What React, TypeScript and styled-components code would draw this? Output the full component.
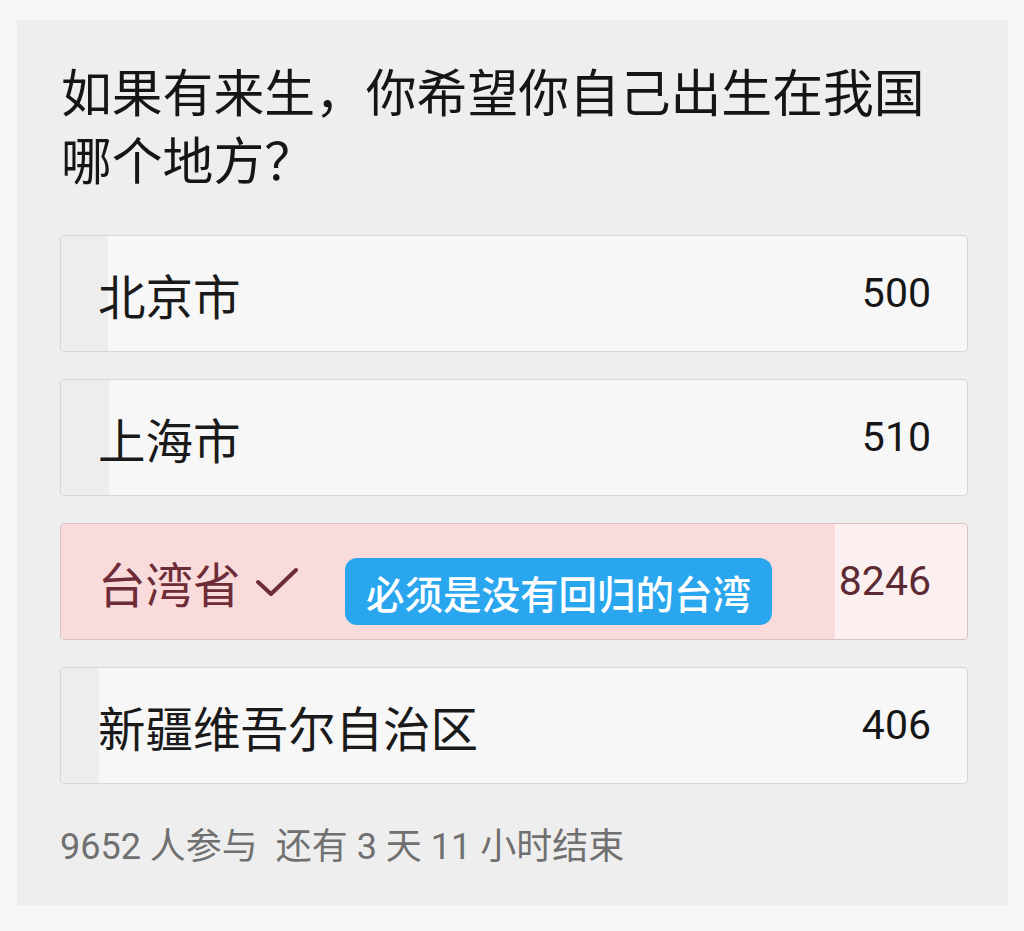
import React from "react";
import styled, { createGlobalStyle } from "styled-components";

const GlobalStyle = createGlobalStyle`
  html, body {
    margin: 0;
    padding: 0;
    background: #f6f6f6;
  }
  body {
    font-family: Roboto, "Noto Sans CJK SC", "Noto Sans", sans-serif;
  }
`;

const Page = styled.div`
  width: 1024px;
  height: 931px;
  box-sizing: border-box;
  padding: 20px 16px 26px 17px;
  background: #f6f6f6;
`;

const Card = styled.div`
  height: 100%;
  box-sizing: border-box;
  background: #eeeeee;
  padding: 41px 40px 0 43px;
  display: flex;
  flex-direction: column;
`;

const Title = styled.h1`
  margin: 0 0 38px 1px;
  font-family: Roboto, "Noto Sans CJK SC", sans-serif;
  font-weight: 400;
  font-size: 50.8px;
  line-height: 68px;
  color: #151515;
  width: 890px;
`;

const Options = styled.div`
  display: flex;
  flex-direction: column;
  gap: 27px;
`;

const Row = styled.div<{ $selected?: boolean }>`
  position: relative;
  height: 117px;
  box-sizing: border-box;
  border: 1.5px solid ${(p) => (p.$selected ? "#d8c2c2" : "#d6d6d6")};
  border-radius: 4px;
  background: ${(p) => (p.$selected ? "#fcefef" : "#f7f7f7")};
`;

const Fill = styled.div<{ $selected?: boolean }>`
  position: absolute;
  left: 0;
  top: 0;
  bottom: 0;
  border-radius: 3px 0 0 3px;
  background: ${(p) => (p.$selected ? "#f9dbdb" : "#ededed")};
`;

const RowContent = styled.div`
  position: relative;
  height: 100%;
  display: flex;
  align-items: center;
  justify-content: space-between;
  padding: 0 36px 0 37px;
`;

const LabelGroup = styled.div`
  display: flex;
  align-items: center;
  gap: 14px;
`;

const Label = styled.span<{ $selected?: boolean }>`
  font-family: "Noto Sans CJK SC", sans-serif;
  font-size: 47.5px;
  line-height: 1;
  color: ${(p) => (p.$selected ? "#6e2c38" : "#1a1a1a")};
  margin-top: 2px;
`;

const Count = styled.span<{ $selected?: boolean }>`
  font-family: Roboto, "Noto Sans", sans-serif;
  font-size: 41px;
  line-height: 1;
  color: ${(p) => (p.$selected ? "#5c2a33" : "#161616")};
`;

const Badge = styled.div`
  position: absolute;
  left: 284px;
  top: 34px;
  height: 67px;
  width: 427px;
  box-sizing: border-box;
  border-radius: 12px;
  background: #29a6ee;
  color: #ffffff;
  font-family: "Noto Sans CJK SC", sans-serif;
  font-weight: 500;
  font-size: 38.5px;
  display: flex;
  align-items: center;
  justify-content: center;
`;

const Footer = styled.div`
  margin-top: 38px;
  font-family: Roboto, "Noto Sans CJK SC", sans-serif;
  font-size: 36px;
  line-height: 50px;
  color: #707070;
  white-space: pre;
`;

const Check = () => (
  <svg width="44" height="32" viewBox="0 0 44 32" style={{ marginTop: 2 }}>
    <path
      d="M3 15 L16 27 L41 3"
      fill="none"
      stroke="#6e2c38"
      strokeWidth="4"
      strokeLinecap="round"
      strokeLinejoin="round"
    />
  </svg>
);

const options = [
  { label: "北京市", count: 500 },
  { label: "上海市", count: 510 },
  { label: "台湾省", count: 8246, selected: true, note: "必须是没有回归的台湾" },
  { label: "新疆维吾尔自治区", count: 406 },
];

const total = 9652;

export default function App() {
  return (
    <>
      <GlobalStyle />
      <Page>
        <Card>
          <Title>如果有来生，你希望你自己出生在我国哪个地方？</Title>
          <Options>
            {options.map((o) => (
              <Row key={o.label} $selected={o.selected}>
                <Fill
                  $selected={o.selected}
                  style={{ width: `${(o.count / total) * 100}%` }}
                />
                <RowContent>
                  <LabelGroup>
                    <Label $selected={o.selected}>{o.label}</Label>
                    {o.selected && <Check />}
                  </LabelGroup>
                  <Count $selected={o.selected}>{o.count}</Count>
                </RowContent>
                {o.note && <Badge>{o.note}</Badge>}
              </Row>
            ))}
          </Options>
          <Footer>{`${total} 人参与  还有 3 天 11 小时结束`}</Footer>
        </Card>
      </Page>
    </>
  );
}
